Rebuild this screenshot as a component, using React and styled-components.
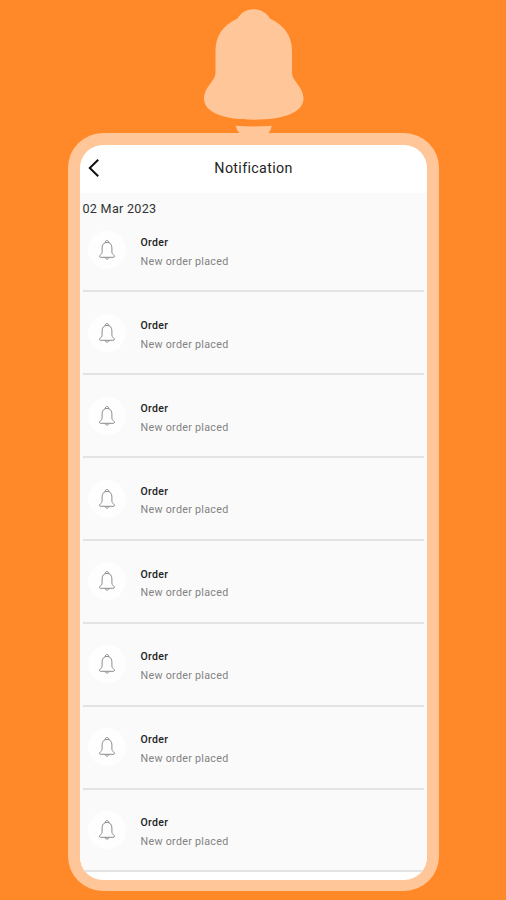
import * as React from "react";
import styled, { createGlobalStyle } from "styled-components";

const GlobalStyle = createGlobalStyle`
  * {
    box-sizing: border-box;
  }

  body {
    margin: 0;
    background: #ff8928;
    font-family: Roboto, "Liberation Sans", sans-serif;
  }
`;

const Page = styled.div`
  display: flex;
  flex-direction: column;
  align-items: flex-start;
  width: 506px;
  height: 900px;
  overflow: hidden;
  background: #ff8928;
`;

const BigBell = styled.svg`
  display: block;
  flex: none;
  width: 506px;
  height: 133px;
  fill: #ffc799;
`;

const Phone = styled.div`
  flex: none;
  width: 371px;
  height: 758px;
  margin-left: 68px;
  padding: 11.5px 12px 11.5px 12px;
  border-radius: 35px;
  background: #ffc799;
`;

const Screen = styled.div`
  display: flex;
  flex-direction: column;
  height: 100%;
  overflow: hidden;
  border-radius: 23px;
  background: #fff;
`;

const Header = styled.header`
  display: grid;
  flex: none;
  grid-template-columns: 28px 1fr 28px;
  align-items: center;
  height: 48px;
  padding-bottom: 1px;
`;

const BackIcon = styled.svg`
  width: 14px;
  height: 20px;
  margin-left: 7px;
  fill: none;
  stroke: #111;
  stroke-width: 2;
`;

const Title = styled.h1`
  margin: 0;
  color: #252525;
  font-size: 14.3px;
  font-weight: 400;
  letter-spacing: 0.32px;
  text-align: center;
`;

const Content = styled.main`
  flex: none;
  height: 679.5px;
  padding: 0 3px;
  background: #fafafa;
`;

const DateLabel = styled.div`
  height: 17px;
  margin-left: -0.5px;
  padding-top: 8px;
  color: #333;
  font-size: 12.6px;
  line-height: 16px;
  letter-spacing: 0.28px;
  white-space: nowrap;
`;

const Row = styled.div`
  display: flex;
  height: 82.86px;
  padding: 21.5px 0 0 5px;
  border-bottom: 2px solid #e2e3e3;
`;

const IconCircle = styled.div`
  display: flex;
  align-items: center;
  justify-content: center;
  width: 38px;
  height: 38px;
  border-radius: 50%;
  background: #fefefe;
`;

const SmallBell = styled.svg`
  width: 18px;
  height: 22px;
  fill: none;
  stroke: #777;
  stroke-width: 0.85;
`;

const Message = styled.div`
  padding: 5.1px 0 0 14.5px;
`;

const Name = styled.div`
  color: #222;
  font-size: 10.5px;
  font-weight: 500;
  line-height: 14px;
  letter-spacing: 0.35px;
`;

const Text = styled.div`
  margin-top: 4.8px;
  color: #828282;
  font-size: 10.7px;
  line-height: 14px;
  letter-spacing: 0.3px;
`;

const notifications = Array.from({ length: 8 }, (_, id) => ({
  id,
  name: "Order",
  text: "New order placed"
}));

function Notification({ name, text }) {
  return (
    <Row>
      <IconCircle>
        <SmallBell viewBox="0 0 18 22">
          <path d="M7.2 3.6C7 .9 11 .9 10.8 3.6M4.1 13.3V8.8C4.1 5.3 6.2 3.4 9 3.4s4.9 1.9 4.9 5.4v4.5c0 1.8 2.6 2.8 2.6 4.1 0 .6-.5.9-1.3.9H2.8c-.8 0-1.3-.3-1.3-.9 0-1.3 2.6-2.3 2.6-4.1ZM7.2 18.6c.2 2 3.4 2 3.6 0" />
        </SmallBell>
      </IconCircle>
      <Message>
        <Name>{name}</Name>
        <Text>{text}</Text>
      </Message>
    </Row>
  );
}

export default function App() {
  return (
    <Page>
      <GlobalStyle />
      <BigBell viewBox="0 0 506 133">
        <path d="M253.5 9.3C246 9.3 241 13 237.5 18.5C223 25 215.5 36 215.5 51V73C215.5 81 204 87 204 98.5C204 113 225 119.7 253.7 119.7S303.5 113 303.5 98.5C303.5 87 292 81 292 73V51C292 36 284 25 270 18.5C266.5 13 261 9.3 253.5 9.3Z" />
        <path d="M235.7 125.8Q253.5 127.4 271.7 125.8Q271 130.5 268.5 133H239.5Q236.5 130.5 235.7 125.8Z" />
      </BigBell>
      <Phone>
        <Screen>
          <Header>
            <BackIcon viewBox="0 0 14 20">
              <path d="M11.2 1.8 2.8 10l8.4 8.2" />
            </BackIcon>
            <Title>Notification</Title>
          </Header>
          <Content>
            <DateLabel>02 Mar 2023</DateLabel>
            {notifications.map(item => (
              <Notification key={item.id} name={item.name} text={item.text} />
            ))}
          </Content>
        </Screen>
      </Phone>
    </Page>
  );
}
